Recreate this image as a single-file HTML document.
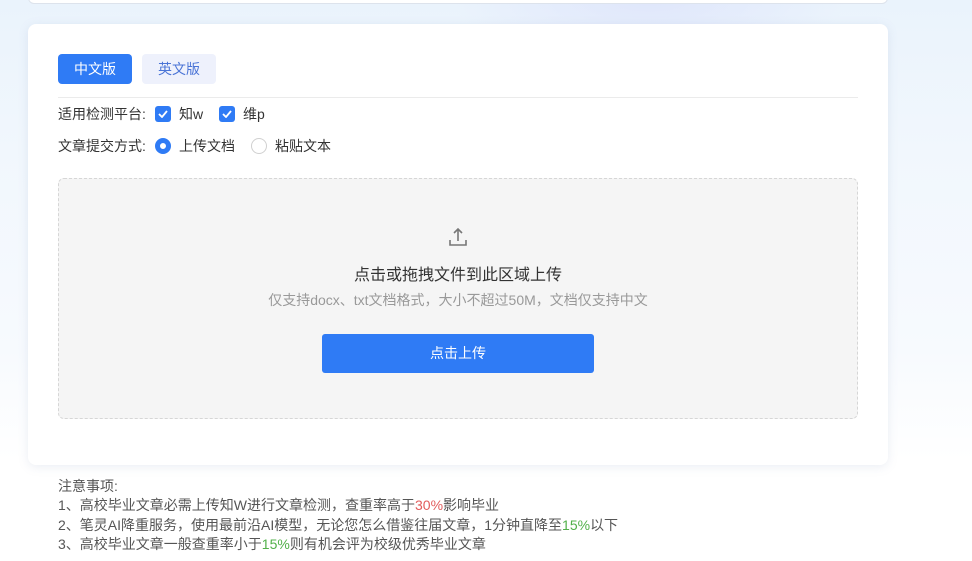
<!DOCTYPE html>
<html><head><meta charset="utf-8"><style>
*{margin:0;padding:0;box-sizing:border-box}
body{width:972px;height:561px;overflow:hidden;font-family:"Liberation Sans","Noto Sans CJK SC",sans-serif;background:linear-gradient(180deg,#eaf3fc 0px,#f1f7fd 150px,#f7fafe 350px,#fff 460px);position:relative;color:#333}
.glow{position:absolute;left:450px;top:-60px;width:400px;height:120px;background:radial-gradient(ellipse,#dfe6fb 0%,rgba(223,230,251,0) 70%)}
.prev{position:absolute;left:28px;top:-10px;width:860px;height:14px;background:#fff;border:1px solid #dde3ec;border-radius:0 0 6px 6px}
.card{position:absolute;left:28px;top:24px;width:860px;height:441px;background:#fff;border-radius:8px;box-shadow:0 2px 10px rgba(120,140,180,.15)}
.tab{position:absolute;top:30px;height:30px;width:74px;border-radius:4px;font-size:14px;line-height:30px;text-align:center}
.t1{left:30px;background:#2f7bf5;color:#fff}
.t2{left:114px;background:#eef1fc;color:#4a74d6}
.div{position:absolute;left:30px;top:73px;width:800px;height:1px;background:#ebebeb}
.row{position:absolute;left:30px;font-size:14px;color:#333;height:20px;width:500px}
.row span{position:absolute;top:0;line-height:20px}
.cb{width:16px;height:16px;border-radius:3px;background:#2f7bf5;display:flex;align-items:center;justify-content:center;top:2px!important}
.rd{width:16px;height:16px;border-radius:50%;top:2px!important}
.up{position:absolute;left:30px;top:154px;width:800px;height:241px;background:#f5f5f5;border:1px dashed #d6d6d6;border-radius:6px;text-align:center}
.btn{position:absolute;left:263px;top:155px;width:272px;height:39px;background:#2f7bf5;border-radius:3px;color:#fff;font-size:14px;line-height:39px}
.notes{position:absolute;left:58px;top:477px;font-size:14px;color:#555;line-height:19.3px}
</style></head><body>
<div class="glow"></div>
<div class="prev"></div>
<div class="card">
<div class="tab t1">中文版</div><div class="tab t2">英文版</div>
<div class="div"></div>
<div class="row" style="top:80px"><span style="left:0">适用检测平台:</span><span class="cb" style="left:97px"><svg width="10" height="8" viewBox="0 0 10 8"><path d="M1 4l3 3 5-6" stroke="#fff" stroke-width="1.8" fill="none"/></svg></span><span style="left:121px">知w</span><span class="cb" style="left:161px"><svg width="10" height="8" viewBox="0 0 10 8"><path d="M1 4l3 3 5-6" stroke="#fff" stroke-width="1.8" fill="none"/></svg></span><span style="left:185px">维p</span></div>
<div class="row" style="top:112px"><span style="left:0">文章提交方式:</span><span class="rd" style="left:97px;border:5px solid #2f7bf5;background:#fff"></span><span style="left:121px">上传文档</span><span class="rd" style="left:193px;border:1px solid #d0d0d0;background:#fff"></span><span style="left:217px">粘贴文本</span></div>
<div class="up">
<svg style="position:absolute;left:389px;top:48px" width="20" height="20" viewBox="0 0 20 20"><path d="M10 2v12M6 6l4-4 4 4M2 13v5h16v-5" stroke="#777" stroke-width="1.6" fill="none"/></svg>
<div style="position:absolute;left:0;width:100%;top:82px;font-size:16px;color:#333">点击或拖拽文件到此区域上传</div>
<div style="position:absolute;left:0;width:100%;top:111px;font-size:14px;color:#999">仅支持docx、txt文档格式，大小不超过50M，文档仅支持中文</div>
<div class="btn">点击上传</div>
</div>
</div>
<div class="notes">注意事项:<br>1、高校毕业文章必需上传知W进行文章检测，查重率高于<span style="color:#e25c5c">30%</span>影响毕业<br>2、笔灵AI降重服务，使用最前沿AI模型，无论您怎么借鉴往届文章，1分钟直降至<span style="color:#52b04a">15%</span>以下<br>3、高校毕业文章一般查重率小于<span style="color:#52b04a">15%</span>则有机会评为校级优秀毕业文章</div>
</body></html>
